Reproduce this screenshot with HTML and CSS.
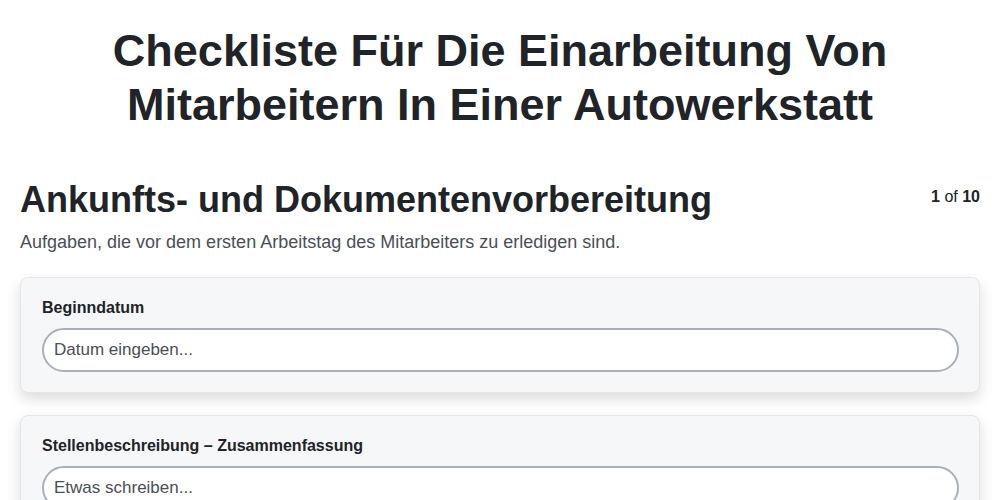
FILE: index.html
```html
<!DOCTYPE html>
<html lang="de">
<head>
    <meta charset="UTF-8">
    <meta name="viewport" content="width=device-width, initial-scale=1.0">
    <title>Checkliste</title>
    <link rel="stylesheet" href="styles.css">
</head>
<body>

    <!-- Page title -->
    <header class="page-header">
        <h1>Checkliste Für Die Einarbeitung Von Mitarbeitern In Einer Autowerkstatt</h1>
    </header>

    <!-- Step section -->
    <section class="step">
        <div class="step-head">
            <h2>Ankunfts- und Dokumentenvorbereitung</h2>
            <span class="step-count"><b>1</b> of <b>10</b></span>
        </div>
        <p class="step-desc">Aufgaben, die vor dem ersten Arbeitstag des Mitarbeiters zu erledigen sind.</p>

        <div class="field-card">
            <label for="start-date">Beginndatum</label>
            <input id="start-date" type="text" placeholder="Datum eingeben...">
        </div>

        <div class="field-card">
            <label for="summary">Stellenbeschreibung – Zusammenfassung</label>
            <input id="summary" type="text" placeholder="Etwas schreiben...">
        </div>
    </section>

</body>
</html>
```

FILE: styles.css
```css
/* Reset default styles */
* {
    margin: 0;
    padding: 0;
    box-sizing: border-box;
}

body {
    font-family: "Liberation Sans", Arial, sans-serif;
    color: #1f2328;
    background-color: #fff;
    padding: 0 20px;
}

.page-header {
    padding-top: 24px;
    text-align: center;
}

.page-header h1 {
    font-size: 45px;
    line-height: 54px;
    font-weight: bold;
    color: #202327;
}

.step {
    margin-top: 46px;
}

.step-head {
    display: flex;
    justify-content: space-between;
    align-items: flex-start;
}

.step-head h2 {
    font-size: 36px;
    line-height: 44px;
    font-weight: bold;
    color: #202327;
}

.step-count {
    font-size: 16px;
    color: #202327;
    padding-top: 10px;
}

.step-desc {
    font-size: 18px;
    line-height: 22px;
    color: #4a4f57;
    margin-top: 9px;
    margin-bottom: 24px;
}

.field-card {
    background-color: #f6f7f9;
    border: 1px solid #e4e6ea;
    border-radius: 8px;
    box-shadow: 0 6px 14px rgba(0, 0, 0, 0.14);
    padding: 20px 20px 20px 21px;
    margin-bottom: 22px;
}

.field-card label {
    display: block;
    font-size: 16px;
    font-weight: bold;
    line-height: 20px;
    color: #202327;
    margin-bottom: 10px;
}

.field-card input {
    display: block;
    width: 100%;
    height: 44px;
    border: 2px solid #a9b0b8;
    border-radius: 22px;
    background-color: #fff;
    padding: 0 10px;
    font-family: inherit;
    font-size: 17px;
    color: #202327;
}

.field-card input::placeholder {
    color: #4a4f57;
}
```
